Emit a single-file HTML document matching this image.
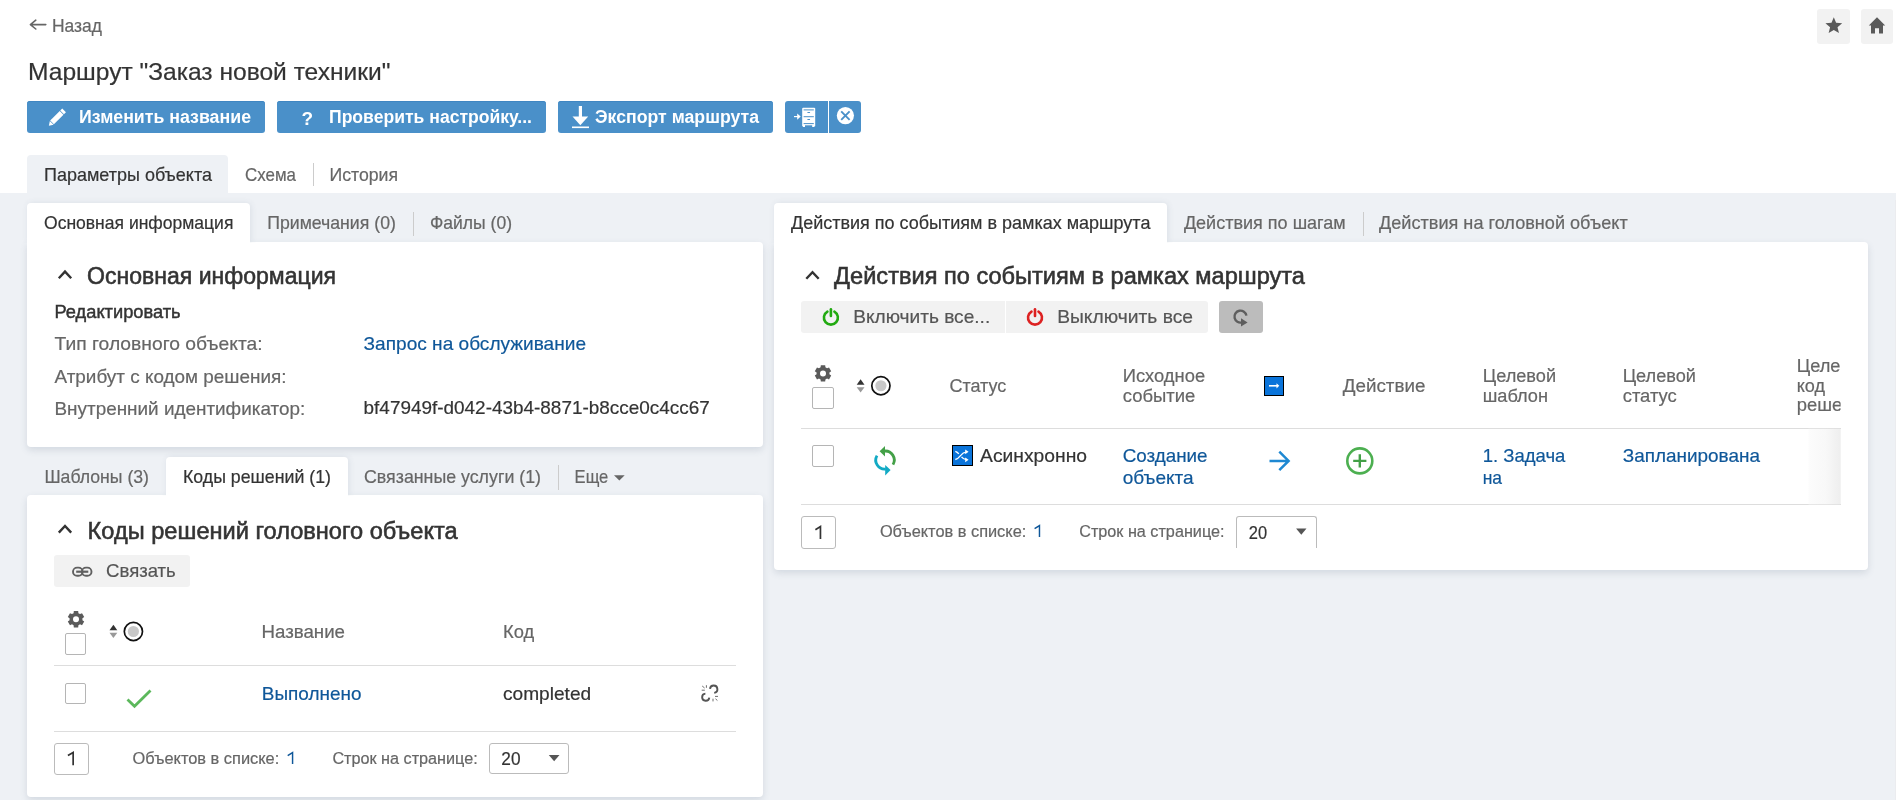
<!DOCTYPE html>
<html><head><meta charset="utf-8"><title>Маршрут</title>
<style>
html,body{margin:0;padding:0}
body{width:1896px;height:800px;overflow:hidden;background:#fff;position:relative;font-family:"Liberation Sans",sans-serif}
.a{position:absolute}
svg text{font-family:"Liberation Sans",sans-serif}
svg{will-change:transform}
</style></head><body>
<div class="a" style="left:0px;top:193px;width:1896px;height:607px;background:#eef1f5"></div>
<div class="a" style="left:1895px;top:200px;width:1px;height:600px;background:#ebecef"></div>
<div class="a" style="left:1817px;top:9px;width:33px;height:35px;background:#f2f2f2;border-radius:3px"></div>
<div class="a" style="left:1861px;top:9px;width:32px;height:35px;background:#f2f2f2;border-radius:3px"></div>
<div class="a" style="left:27px;top:101px;width:238px;height:32px;background:#4a90c9;border-radius:3px;box-shadow:inset 0 1px 0 #3f86c2"></div>
<div class="a" style="left:277px;top:101px;width:269px;height:32px;background:#4a90c9;border-radius:3px;box-shadow:inset 0 1px 0 #3f86c2"></div>
<div class="a" style="left:558px;top:101px;width:215px;height:32px;background:#4a90c9;border-radius:3px;box-shadow:inset 0 1px 0 #3f86c2"></div>
<div class="a" style="left:785px;top:101px;width:43px;height:32px;background:#4a90c9;border-radius:3px 0 0 3px"></div>
<div class="a" style="left:829px;top:101px;width:32px;height:32px;background:#4a90c9;border-radius:0 3px 3px 0"></div>
<div class="a" style="left:27px;top:155px;width:200.5px;height:38px;background:#eef1f5;border-radius:4px 4px 0 0"></div>
<div class="a" style="left:313px;top:163px;width:1px;height:23px;background:#ccc"></div>
<div class="a" style="left:27px;top:242px;width:736px;height:205px;background:#fff;border-radius:0 4px 4px 4px;box-shadow:0 3px 7px rgba(60,80,110,0.15)"></div>
<div class="a" style="left:27px;top:203px;width:223px;height:40px;background:#fff;border-radius:4px 4px 0 0;box-shadow:1px 0 6px rgba(60,80,110,0.10);clip-path:inset(-10px -10px 0 -10px)"></div>
<div class="a" style="left:413px;top:212px;width:1px;height:24px;background:#ccc"></div>
<div class="a" style="left:27px;top:495px;width:736px;height:302px;background:#fff;border-radius:4px;box-shadow:0 3px 7px rgba(60,80,110,0.15)"></div>
<div class="a" style="left:166px;top:457px;width:182px;height:39px;background:#fff;border-radius:4px 4px 0 0;box-shadow:1px 0 6px rgba(60,80,110,0.10);clip-path:inset(-10px -10px 0 -10px)"></div>
<div class="a" style="left:558px;top:465px;width:1px;height:25px;background:#ccc"></div>
<div class="a" style="left:54.4px;top:555px;width:135.29999999999998px;height:31.700000000000045px;background:#f2f2f2;border-radius:3px"></div>
<div class="a" style="left:65px;top:633.3px;width:20.700000000000003px;height:21.40000000000009px;background:#fff;border:1.4px solid #b5b5b5;border-radius:2px;box-sizing:border-box"></div>
<div class="a" style="left:54.2px;top:665px;width:681.8px;height:1px;background:#ddd"></div>
<div class="a" style="left:65px;top:683.2px;width:20.700000000000003px;height:20.399999999999977px;background:#fff;border:1.4px solid #b5b5b5;border-radius:2px;box-sizing:border-box"></div>
<div class="a" style="left:54.2px;top:731px;width:681.8px;height:1px;background:#ddd"></div>
<div class="a" style="left:54.2px;top:743.3px;width:34.5px;height:31.40000000000009px;background:#fff;border:1.4px solid #bbb;border-radius:3px;box-sizing:border-box"></div>
<div class="a" style="left:489.2px;top:743.2px;width:80.30000000000001px;height:31.299999999999955px;background:#fff;border:1.4px solid #bbb;border-radius:3px;box-sizing:border-box"></div>
<div class="a" style="left:774px;top:242px;width:1094px;height:328px;background:#fff;border-radius:0 4px 4px 4px;box-shadow:0 3px 7px rgba(60,80,110,0.15)"></div>
<div class="a" style="left:774px;top:203px;width:393px;height:40px;background:#fff;border-radius:4px 4px 0 0;box-shadow:1px 0 6px rgba(60,80,110,0.10);clip-path:inset(-10px -10px 0 -10px)"></div>
<div class="a" style="left:1363px;top:212px;width:1px;height:24px;background:#ccc"></div>
<div class="a" style="left:800.8px;top:301px;width:204.5px;height:31.5px;background:#f2f2f2;border-radius:3px 0 0 3px"></div>
<div class="a" style="left:1006.3px;top:301px;width:201.5px;height:31.5px;background:#f2f2f2;border-radius:0 3px 3px 0"></div>
<div class="a" style="left:1219.2px;top:301px;width:43.700000000000045px;height:31.600000000000023px;background:#bcbcbc;border-radius:3px"></div>
<div class="a" style="left:812.2px;top:387.2px;width:21.399999999999977px;height:21.400000000000034px;background:#fff;border:1.4px solid #b5b5b5;border-radius:2px;box-sizing:border-box"></div>
<div class="a" style="left:1264px;top:376px;width:20px;height:19.69999999999999px;background:#0a74da;border:1.3px solid #000;box-sizing:border-box"></div>
<div class="a" style="left:801.3px;top:427.8px;width:1039.4px;height:1.0px;background:#ddd"></div>
<div class="a" style="left:812.2px;top:445.4px;width:21.399999999999977px;height:21.400000000000034px;background:#fff;border:1.4px solid #b5b5b5;border-radius:2px;box-sizing:border-box"></div>
<div class="a" style="left:951.8px;top:445.1px;width:21.0px;height:20.799999999999955px;background:#0a74da;border:1.3px solid #000;box-sizing:border-box"></div>
<div class="a" style="left:801.3px;top:504.3px;width:1039.4px;height:1.0px;background:#ddd"></div>
<div class="a" style="left:801.2px;top:515.9px;width:34.59999999999991px;height:32.89999999999998px;background:#fff;border:1.4px solid #bbb;border-radius:3px;box-sizing:border-box"></div>
<div class="a" style="left:1236.2px;top:515.9px;width:80.70000000000005px;height:31.800000000000068px;background:#fff;border:1.4px solid #bbb;border-bottom:none;border-radius:3px 3px 0 0;box-sizing:border-box"></div>
<svg class="a" style="left:0;top:0" width="1896" height="800" viewBox="0 0 1896 800">
<path d="M45.8 24.6H31 M35.8 20.2 L30.4 24.6 L35.8 29" stroke="#666" stroke-width="1.6" fill="none" stroke-linecap="round" stroke-linejoin="round"/>
<text x="52" y="31.8" font-size="17.5" fill="#666" textLength="50.0" lengthAdjust="spacingAndGlyphs" stroke="#666" stroke-width="0.2">Назад</text>
<polygon points="1833.80,17.20 1836.09,22.84 1842.17,23.28 1837.51,27.21 1838.97,33.12 1833.80,29.90 1828.63,33.12 1830.09,27.21 1825.43,23.28 1831.51,22.84" fill="#5a5a5a"/>
<path d="M1877 17.2 L1885.2 25.4 L1883 25.4 L1883 33.6 L1879 33.6 L1879 28.3 L1875 28.3 L1875 33.6 L1871 33.6 L1871 25.4 L1868.8 25.4 Z" fill="#5a5a5a"/>
<text x="28" y="80" font-size="24" fill="#333" textLength="362.5" lengthAdjust="spacingAndGlyphs" stroke="#333" stroke-width="0.2">Маршрут &quot;Заказ новой техники&quot;</text>
<text x="79" y="123" font-size="18" fill="#fff" textLength="172.0" lengthAdjust="spacingAndGlyphs" font-weight="bold">Изменить название</text>
<text x="329" y="123" font-size="18" fill="#fff" textLength="203.0" lengthAdjust="spacingAndGlyphs" font-weight="bold">Проверить настройку...</text>
<text x="595" y="123" font-size="18" fill="#fff" textLength="164.0" lengthAdjust="spacingAndGlyphs" font-weight="bold">Экспорт маршрута</text>
<g transform="translate(57,117.5) rotate(-45)"><rect x="-7" y="-2.6" width="13.5" height="5.2" fill="#fff"/><path d="M-7.5 -2.6 L-11.5 0 L-7.5 2.6 Z" fill="#fff"/><rect x="7.2" y="-2.6" width="2.8" height="5.2" fill="#fff"/></g>
<text x="301.5" y="125.3" font-size="19" fill="#fff" font-weight="bold">?</text>
<path d="M580.4 106 V117" stroke="#fff" stroke-width="3.2"/><path d="M572.5 116.5 H588.2 L580.35 125.2 Z" fill="#fff"/><rect x="572" y="126.5" width="17" height="1.6" fill="#fff"/>
<rect x="802.2" y="107.7" width="13" height="19.4" rx="1" fill="#fff"/><rect x="803.6" y="109.4" width="10.2" height="1" fill="#4a90c9"/><rect x="803.6" y="116.2" width="10.2" height="1" fill="#4a90c9"/><rect x="803.6" y="123.1" width="10.2" height="1" fill="#4a90c9"/><rect x="807.3" y="112.1" width="2.8" height="1" rx="0.5" fill="#4a90c9"/><rect x="807.3" y="119" width="2.8" height="1" rx="0.5" fill="#4a90c9"/><rect x="805" y="125.3" width="7.2" height="2" fill="#4a90c9"/><rect x="802" y="126.4" width="1" height="1" fill="#4a90c9"/><rect x="814.4" y="126.4" width="1" height="1" fill="#4a90c9"/><path d="M794 116.6 H798" stroke="#fff" stroke-width="1.2"/><path d="M797.2 113.4 L800.7 116.6 L797.2 119.8 Z" fill="#fff"/>
<circle cx="845.4" cy="115.6" r="8.6" fill="#fff"/><path d="M841.2 111.4 L849.6 119.8 M849.6 111.4 L841.2 119.8" stroke="#4a90c9" stroke-width="1.9"/>
<text x="44" y="180.5" font-size="17.7" fill="#333" textLength="168.0" lengthAdjust="spacingAndGlyphs" stroke="#333" stroke-width="0.2">Параметры объекта</text>
<text x="245" y="180.5" font-size="17.7" fill="#666" textLength="51.0" lengthAdjust="spacingAndGlyphs" stroke="#666" stroke-width="0.2">Схема</text>
<text x="329.5" y="180.5" font-size="17.7" fill="#666" textLength="68.5" lengthAdjust="spacingAndGlyphs" stroke="#666" stroke-width="0.2">История</text>
<text x="44" y="229" font-size="17.7" fill="#333" textLength="189.4" lengthAdjust="spacingAndGlyphs" stroke="#333" stroke-width="0.2">Основная информация</text>
<text x="267.2" y="229" font-size="17.7" fill="#666" textLength="128.7" lengthAdjust="spacingAndGlyphs" stroke="#666" stroke-width="0.2">Примечания (0)</text>
<text x="429.9" y="229" font-size="17.7" fill="#666" textLength="82.1" lengthAdjust="spacingAndGlyphs" stroke="#666" stroke-width="0.2">Файлы (0)</text>
<path d="M58.8 278.2 L65 271.6 L71.2 278.2" stroke="#333" stroke-width="2.4" fill="none"/>
<text x="87" y="284" font-size="23.5" fill="#333" textLength="249.0" lengthAdjust="spacingAndGlyphs" stroke="#333" stroke-width="0.55">Основная информация</text>
<text x="54.5" y="317.7" font-size="18.3" fill="#333" textLength="126.1" lengthAdjust="spacingAndGlyphs" stroke="#333" stroke-width="0.45">Редактировать</text>
<text x="54.5" y="350" font-size="19" fill="#666" textLength="208.1" lengthAdjust="spacingAndGlyphs" stroke="#666" stroke-width="0.2">Тип головного объекта:</text>
<text x="54.5" y="382.7" font-size="19" fill="#666" textLength="232.0" lengthAdjust="spacingAndGlyphs" stroke="#666" stroke-width="0.2">Атрибут с кодом решения:</text>
<text x="54.5" y="415.2" font-size="19" fill="#666" textLength="250.7" lengthAdjust="spacingAndGlyphs" stroke="#666" stroke-width="0.2">Внутренний идентификатор:</text>
<text x="363.6" y="350" font-size="19" fill="#0f5799" textLength="222.4" lengthAdjust="spacingAndGlyphs" stroke="#0f5799" stroke-width="0.2">Запрос на обслуживание</text>
<text x="363.6" y="414.4" font-size="19" fill="#333" textLength="346.1" lengthAdjust="spacingAndGlyphs" stroke="#333" stroke-width="0.2">bf47949f-d042-43b4-8871-b8cce0c4cc67</text>
<text x="44.4" y="482.5" font-size="17.7" fill="#666" textLength="104.6" lengthAdjust="spacingAndGlyphs" stroke="#666" stroke-width="0.2">Шаблоны (3)</text>
<text x="183" y="482.5" font-size="17.7" fill="#333" textLength="148.0" lengthAdjust="spacingAndGlyphs" stroke="#333" stroke-width="0.2">Коды решений (1)</text>
<text x="364" y="482.5" font-size="17.7" fill="#666" textLength="177.0" lengthAdjust="spacingAndGlyphs" stroke="#666" stroke-width="0.2">Связанные услуги (1)</text>
<text x="574.6" y="482.5" font-size="17.7" fill="#666" textLength="33.7" lengthAdjust="spacingAndGlyphs" stroke="#666" stroke-width="0.2">Еще</text>
<path d="M614 475.2 H624.7 L619.35 480.6 Z" fill="#666"/>
<path d="M58.8 532.6 L65 526 L71.2 532.6" stroke="#333" stroke-width="2.4" fill="none"/>
<text x="87.6" y="538.6" font-size="23.5" fill="#333" textLength="370.1" lengthAdjust="spacingAndGlyphs" stroke="#333" stroke-width="0.55">Коды решений головного объекта</text>
<g stroke="#606060" stroke-width="1.9" fill="none"><rect x="73" y="567.6" width="9.6" height="8.2" rx="4.1"/><rect x="81.9" y="567.6" width="9.6" height="8.2" rx="4.1"/></g><path d="M76.2 571.7 H88.3" stroke="#606060" stroke-width="2.2"/>
<text x="106.1" y="577" font-size="18.5" fill="#555" textLength="69.7" lengthAdjust="spacingAndGlyphs" stroke="#555" stroke-width="0.2">Связать</text>
<g transform="translate(76,619.2)"><path d="M-2.41 -6.04 L-2.19 -8.21 L2.19 -8.21 L2.41 -6.04 L4.02 -5.11 L6.02 -6.00 L8.21 -2.21 L6.43 -0.93 L6.43 0.93 L8.21 2.21 L6.02 6.00 L4.02 5.11 L2.41 6.04 L2.19 8.21 L-2.19 8.21 L-2.41 6.04 L-4.02 5.11 L-6.02 6.00 L-8.21 2.21 L-6.43 0.93 L-6.43 -0.93 L-8.21 -2.21 L-6.02 -6.00 L-4.02 -5.11 Z M3.0 0 A3.0 3.0 0 1 0 -3.0 0 A3.0 3.0 0 1 0 3.0 0 Z" fill="#5a5a5a" fill-rule="evenodd"/></g>
<path d="M109.5 630.3 L113.4 624.8 L117.3 630.3 Z" fill="#333"/><path d="M109.5 632.8 L113.4 638.0999999999999 L117.3 632.8 Z" fill="#999"/>
<circle cx="133.4" cy="631.5" r="9.1" fill="#fff" stroke="#111" stroke-width="1.7"/><circle cx="133.4" cy="631.5" r="5.6" fill="#c8c8c8"/>
<text x="261.5" y="638.2" font-size="18.7" fill="#666" textLength="83.5" lengthAdjust="spacingAndGlyphs" stroke="#666" stroke-width="0.2">Название</text>
<text x="503" y="638.2" font-size="18.7" fill="#666" textLength="31.2" lengthAdjust="spacingAndGlyphs" stroke="#666" stroke-width="0.2">Код</text>
<path d="M127.5 699.5 L134.5 706.3 L150.5 690.5" stroke="#5cb85c" stroke-width="2.8" fill="none"/>
<text x="261.8" y="699.8" font-size="19" fill="#0f5799" textLength="99.7" lengthAdjust="spacingAndGlyphs" stroke="#0f5799" stroke-width="0.2">Выполнено</text>
<text x="503" y="700" font-size="19" fill="#333" textLength="88.2" lengthAdjust="spacingAndGlyphs" stroke="#333" stroke-width="0.2">completed</text>
<g stroke="#555" stroke-width="1.9" fill="none"><path d="M710 688.9 A3.7 3.7 0 1 1 714.2 692.9"/><path d="M705.4 693.6 A3.6 3.6 0 1 0 709.3 697.7"/></g><g stroke="#666" stroke-width="0.95" fill="none"><path d="M702.2 686 L704.6 688 M706.4 685.2 V687.8 M701.7 690.2 H704.8 M715 696.4 H718 M713 698.7 V701.4 M715.5 698.8 L717.4 700.5"/></g>
<path d="M67.89999999999999 755.6 L73.15 752.5 V765.2" stroke="#333" stroke-width="1.7" fill="none" stroke-linejoin="miter"/>
<text x="132.6" y="764" font-size="16.3" fill="#666" textLength="146.7" lengthAdjust="spacingAndGlyphs" stroke="#666" stroke-width="0.2">Объектов в списке:</text>
<path d="M287.7 755.6999999999999 L292.575 752.5999999999999 V764" stroke="#0f5799" stroke-width="1.45" fill="none" stroke-linejoin="miter"/>
<text x="332.4" y="764" font-size="16.3" fill="#666" textLength="145.3" lengthAdjust="spacingAndGlyphs" stroke="#666" stroke-width="0.2">Строк на странице:</text>
<text x="501.3" y="765" font-size="18.5" fill="#333" textLength="19.2" lengthAdjust="spacingAndGlyphs" stroke="#333" stroke-width="0.2">20</text>
<path d="M548.8 755 H559.5 L554.15 761.2 Z" fill="#555"/>
<text x="791" y="229" font-size="17.7" fill="#333" textLength="359.4" lengthAdjust="spacingAndGlyphs" stroke="#333" stroke-width="0.2">Действия по событиям в рамках маршрута</text>
<text x="1183.9" y="229" font-size="17.7" fill="#666" textLength="161.8" lengthAdjust="spacingAndGlyphs" stroke="#666" stroke-width="0.2">Действия по шагам</text>
<text x="1379" y="229" font-size="17.7" fill="#666" textLength="248.7" lengthAdjust="spacingAndGlyphs" stroke="#666" stroke-width="0.2">Действия на головной объект</text>
<path d="M806.3 278.8 L812.5 272.2 L818.7 278.8" stroke="#333" stroke-width="2.4" fill="none"/>
<text x="834.1" y="284.3" font-size="23.5" fill="#333" textLength="470.9" lengthAdjust="spacingAndGlyphs" stroke="#333" stroke-width="0.55">Действия по событиям в рамках маршрута</text>
<path d="M827.4 311.55 A7 7 0 1 0 834.4 311.55" stroke="#22aa11" stroke-width="2.6" fill="none" stroke-linecap="round"/><path d="M830.9 309.20000000000005 V316.0" stroke="#22aa11" stroke-width="2.6" stroke-linecap="round"/>
<path d="M1031.5 311.55 A7 7 0 1 0 1038.5 311.55" stroke="#dd2222" stroke-width="2.6" fill="none" stroke-linecap="round"/><path d="M1035 309.20000000000005 V316.0" stroke="#dd2222" stroke-width="2.6" stroke-linecap="round"/>
<text x="853.2" y="323.4" font-size="19" fill="#555" textLength="137.0" lengthAdjust="spacingAndGlyphs" stroke="#555" stroke-width="0.2">Включить все...</text>
<text x="1057.2" y="323.4" font-size="19" fill="#555" textLength="135.8" lengthAdjust="spacingAndGlyphs" stroke="#555" stroke-width="0.2">Выключить все</text>
<path d="M1246.4 315.6 A6 6 0 1 0 1242 322.4" stroke="#5e5e5e" stroke-width="2.4" fill="none"/><path d="M1241 318.2 L1247.6 322.6 L1241 326.4 Z" fill="#5e5e5e"/>
<g transform="translate(823,373.4)"><path d="M-2.41 -6.04 L-2.19 -8.21 L2.19 -8.21 L2.41 -6.04 L4.02 -5.11 L6.02 -6.00 L8.21 -2.21 L6.43 -0.93 L6.43 0.93 L8.21 2.21 L6.02 6.00 L4.02 5.11 L2.41 6.04 L2.19 8.21 L-2.19 8.21 L-2.41 6.04 L-4.02 5.11 L-6.02 6.00 L-8.21 2.21 L-6.43 0.93 L-6.43 -0.93 L-8.21 -2.21 L-6.02 -6.00 L-4.02 -5.11 Z M3.0 0 A3.0 3.0 0 1 0 -3.0 0 A3.0 3.0 0 1 0 3.0 0 Z" fill="#5a5a5a" fill-rule="evenodd"/></g>
<path d="M856.7 384.7 L860.6 379.2 L864.5 384.7 Z" fill="#333"/><path d="M856.7 387.2 L860.6 392.5 L864.5 387.2 Z" fill="#999"/>
<circle cx="880.9" cy="385.75" r="9.1" fill="#fff" stroke="#111" stroke-width="1.7"/><circle cx="880.9" cy="385.75" r="5.6" fill="#c8c8c8"/>
<text x="949.4" y="392.2" font-size="18.7" fill="#666" textLength="56.9" lengthAdjust="spacingAndGlyphs" stroke="#666" stroke-width="0.2">Статус</text>
<text x="1122.7" y="382" font-size="18.7" fill="#666" textLength="82.4" lengthAdjust="spacingAndGlyphs" stroke="#666" stroke-width="0.2">Исходное</text>
<text x="1122.7" y="401.5" font-size="18.7" fill="#666" textLength="72.7" lengthAdjust="spacingAndGlyphs" stroke="#666" stroke-width="0.2">событие</text>
<path d="M1269 385.8 H1277" stroke="#fff" stroke-width="1.6"/><path d="M1276.5 383.2 L1279.3 385.8 L1276.5 388.4 Z" fill="#fff"/>
<text x="1342.8" y="392.2" font-size="18.7" fill="#666" textLength="82.6" lengthAdjust="spacingAndGlyphs" stroke="#666" stroke-width="0.2">Действие</text>
<text x="1482.7" y="382" font-size="18.7" fill="#666" textLength="73.4" lengthAdjust="spacingAndGlyphs" stroke="#666" stroke-width="0.2">Целевой</text>
<text x="1482.7" y="401.5" font-size="18.7" fill="#666" textLength="65.3" lengthAdjust="spacingAndGlyphs" stroke="#666" stroke-width="0.2">шаблон</text>
<text x="1622.7" y="382" font-size="18.7" fill="#666" textLength="73.3" lengthAdjust="spacingAndGlyphs" stroke="#666" stroke-width="0.2">Целевой</text>
<text x="1622.7" y="401.5" font-size="18.7" fill="#666" textLength="54.1" lengthAdjust="spacingAndGlyphs" stroke="#666" stroke-width="0.2">статус</text>
<clipPath id="cl"><rect x="1780" y="350" width="60.6" height="80"/></clipPath>
<g clip-path="url(#cl)">
<text x="1796.7" y="371.5" font-size="18.7" fill="#666" textLength="73.4" lengthAdjust="spacingAndGlyphs" stroke="#666" stroke-width="0.2">Целевой</text>
<text x="1796.7" y="391.7" font-size="18.7" fill="#666" textLength="28.3" lengthAdjust="spacingAndGlyphs" stroke="#666" stroke-width="0.2">код</text>
<text x="1796.7" y="411.3" font-size="18.7" fill="#666" textLength="76.0" lengthAdjust="spacingAndGlyphs" stroke="#666" stroke-width="0.2">решения</text>
</g>
<path d="M884.2 451.1 A9 9 0 0 1 893 464.6" stroke="#43a047" stroke-width="2.8" fill="none"/><path d="M879.6 451.2 L885 446 L885 456.6 Z" fill="#43a047"/>
<path d="M877 455.6 A9 9 0 0 0 885.8 469.1" stroke="#12aac4" stroke-width="2.8" fill="none"/><path d="M890.6 470.1 L885.2 465 L885.2 475.6 Z" fill="#12aac4"/>
<g stroke="#fff" stroke-width="1.3" fill="none"><path d="M955.3 451.3 Q957.5 452 958.8 453.8"/><path d="M955.3 459.5 Q958 459 961 455.2 Q963 452.5 966.2 452.2"/><path d="M961.5 456.8 Q963.5 459.3 966.2 459.5"/></g><path d="M965.2 449.5 L968.6 451.8 L965.2 454.2 Z M965.2 457.5 L968.6 459.8 L965.2 462.2 Z" fill="#fff"/>
<text x="980.1" y="462" font-size="19" fill="#333" textLength="106.9" lengthAdjust="spacingAndGlyphs" stroke="#333" stroke-width="0.2">Асинхронно</text>
<text x="1122.7" y="462" font-size="19" fill="#0f5799" textLength="84.9" lengthAdjust="spacingAndGlyphs" stroke="#0f5799" stroke-width="0.2">Создание</text>
<text x="1122.7" y="484" font-size="19" fill="#0f5799" textLength="71.0" lengthAdjust="spacingAndGlyphs" stroke="#0f5799" stroke-width="0.2">объекта</text>
<path d="M1269.5 460.9 H1288.3 M1279.3 451.6 L1288.6 460.9 L1279.3 470.2" stroke="#1e88d2" stroke-width="2.5" fill="none"/>
<circle cx="1359.8" cy="460.9" r="12.5" stroke="#4caf50" stroke-width="2.6" fill="none"/><path d="M1353.2 460.9 H1366.4 M1359.8 454.3 V467.5" stroke="#43a047" stroke-width="2.4"/>
<text x="1482.7" y="462" font-size="19" fill="#0f5799" textLength="82.7" lengthAdjust="spacingAndGlyphs" stroke="#0f5799" stroke-width="0.2">1. Задача</text>
<text x="1482.7" y="484" font-size="19" fill="#0f5799" textLength="19.4" lengthAdjust="spacingAndGlyphs" stroke="#0f5799" stroke-width="0.2">на</text>
<text x="1622.7" y="462" font-size="19" fill="#0f5799" textLength="137.3" lengthAdjust="spacingAndGlyphs" stroke="#0f5799" stroke-width="0.2">Запланирована</text>
<defs><linearGradient id="fade" x1="0" x2="1"><stop offset="0" stop-color="#fcfcfc"/><stop offset="0.55" stop-color="#f8f8f8"/><stop offset="1" stop-color="#eeeeee"/></linearGradient></defs>
<rect x="1808.5" y="428.8" width="32.2" height="75.5" fill="url(#fade)"/>
<path d="M815.4 529.6999999999999 L820.4499999999999 526.5999999999999 V539" stroke="#333" stroke-width="1.7" fill="none" stroke-linejoin="miter"/>
<text x="879.9" y="537" font-size="16.3" fill="#666" textLength="146.4" lengthAdjust="spacingAndGlyphs" stroke="#666" stroke-width="0.2">Объектов в списке:</text>
<path d="M1034.6 528.6999999999999 L1039.4750000000001 525.5999999999999 V537" stroke="#0f5799" stroke-width="1.45" fill="none" stroke-linejoin="miter"/>
<text x="1079.2" y="537" font-size="16.3" fill="#666" textLength="145.3" lengthAdjust="spacingAndGlyphs" stroke="#666" stroke-width="0.2">Строк на странице:</text>
<text x="1248.8" y="539" font-size="18.5" fill="#333" textLength="18.3" lengthAdjust="spacingAndGlyphs" stroke="#333" stroke-width="0.2">20</text>
<path d="M1296.1 528.6 H1306.5 L1301.3 534.7 Z" fill="#555"/>
</svg>
</body></html>
